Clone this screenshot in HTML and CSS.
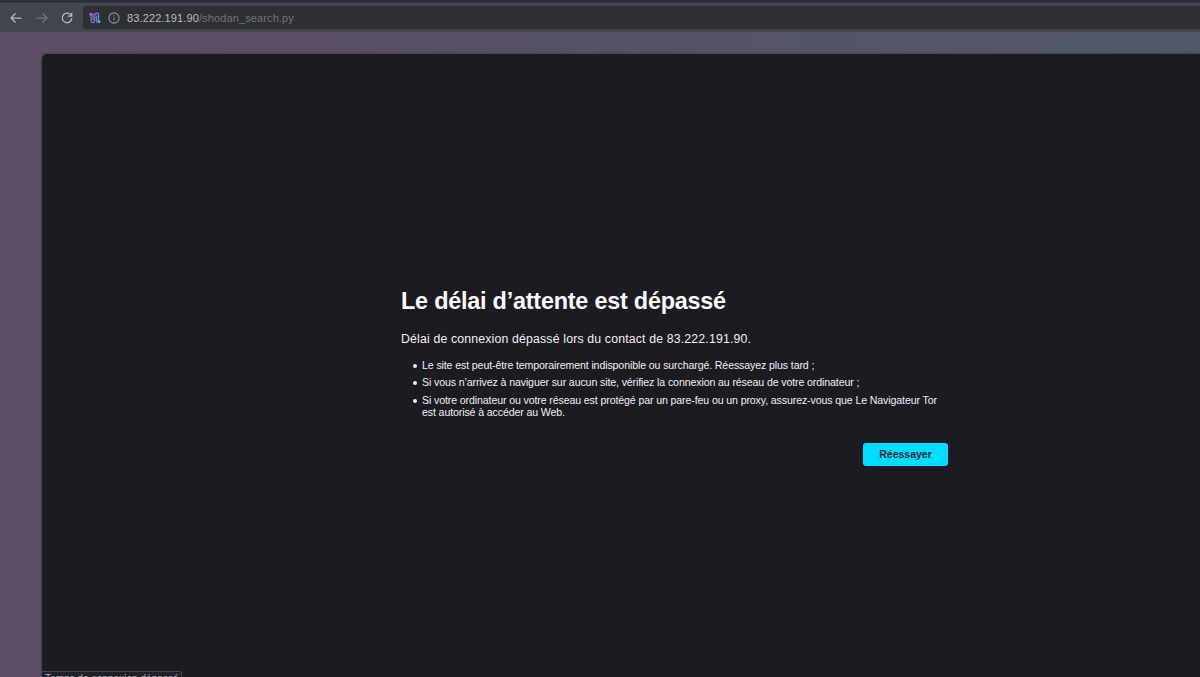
FILE: index.html
```html
<!DOCTYPE html>
<html lang="fr">
<head>
<meta charset="utf-8">
<title>Le délai d’attente est dépassé</title>
<link rel="stylesheet" href="styles.css">
</head>
<body>
<div class="browser">
  <header class="toolbar">
    <svg class="icon back" viewBox="0 0 14 14"><path d="M12.2 7H2M6.2 2.8 2 7l4.2 4.2"/></svg>
    <svg class="icon forward" viewBox="0 0 14 14"><path d="M1.8 7H12M7.8 2.8 12 7l-4.2 4.2"/></svg>
    <svg class="icon reload" viewBox="0 0 14 14"><path d="M11.1 4.3A4.8 4.8 0 1 0 11.8 7.6M11.7 2v3.2H8.3"/></svg>
    <div class="address">
      <svg class="circuit" viewBox="0 0 12 12">
        <defs><linearGradient id="route" gradientUnits="userSpaceOnUse" x1="0" y1="0" x2="12" y2="12"><stop offset="0" stop-color="#b45fdc"/><stop offset=".5" stop-color="#7f83e6"/><stop offset="1" stop-color="#43a5df"/></linearGradient></defs>
        <path d="M2 2.2v6.6a1.9 1.9 0 0 0 3.8 0V3a1.9 1.9 0 0 1 3.8 0v6.4M4 1.2v7.3M7.7 3.5v7.3" fill="none" stroke="url(#route)" stroke-width="1.1"/>
        <circle cx="1.8" cy="2.3" r="1.6" fill="#b45bd8"/><circle cx="10" cy="9.6" r="1.6" fill="#42aee6"/>
      </svg>
      <svg class="info" viewBox="0 0 12 12"><circle cx="6" cy="6" r="5.1"/><path d="M6 5.4v3.2M6 3.2v1.2"/></svg>
      <div class="url"><span class="host">83.222.191.90</span>/shodan_search.py</div>
    </div>
  </header>
  <main class="viewport">
    <section class="page">
      <div class="message">
        <h1 class="title">Le délai d’attente est dépassé</h1>
        <p class="summary">Délai de connexion dépassé lors du contact de 83.222.191.90.</p>
        <ul class="advice">
          <li>Le site est peut-être temporairement indisponible ou surchargé. Réessayez plus tard ;</li>
          <li>Si vous n’arrivez à naviguer sur aucun site, vérifiez la connexion au réseau de votre ordinateur ;</li>
          <li>Si votre ordinateur ou votre réseau est protégé par un pare-feu ou un proxy, assurez-vous que Le Navigateur Tor<br>est autorisé à accéder au Web.</li>
        </ul>
        <button class="retry">Réessayer</button>
      </div>
      <div class="status">Temps de connexion dépassé</div>
    </section>
  </main>
</div>
</body>
</html>
```

FILE: styles.css
```css
* { box-sizing: border-box; }
body { margin: 0; font-family: "Liberation Sans", Arial, sans-serif; }
.browser { display: flex; flex-direction: column; width: 1200px; height: 677px; overflow: hidden; }
.toolbar {
  flex: none; display: flex; align-items: center; height: 32px; padding: 4px 0 0 9px;
  background: linear-gradient(#2e313d 0 3px, #4a4d57 3px 4px, #42454d 4px 31px, #47494f 31px);
}
.icon { flex: none; width: 14px; height: 14px; fill: none; stroke: #b9bbbe; stroke-width: 1.25; stroke-linecap: round; stroke-linejoin: round; }
.forward { margin-left: 11.5px; stroke: #74767b; }
.reload { margin-left: 11.5px; }
.address {
  flex: 1; display: flex; align-items: center; height: 23px; margin: 0 0 1px 9px; padding-left: 6px;
  background: #2e2f33; border-radius: 3px 0 0 3px;
}
.circuit { flex: none; width: 12px; height: 12px; }
.info { flex: none; width: 12px; height: 12px; margin-left: 7px; fill: none; stroke: #929397; stroke-width: 1.1; }
.url { margin-left: 7px; color: #727377; font-size: 11px; line-height: 14px; letter-spacing: .12px; white-space: nowrap; }
.host { color: #bbbcbf; }
.viewport {
  flex: 1; display: flex; min-height: 0; padding: 21px 0 0 41px;
  background: linear-gradient(100deg, #5d4e67 0, #5b4f66 20%, #535568 70%, #505966 100%);
}
.page {
  position: relative; flex: 1; padding: 233px 0 0 359px; overflow: hidden;
  background: #1c1b21; border: solid #464650; border-width: 1px 0 0 1px; border-radius: 6px 0 0 0;
  box-shadow: 0 0 3px #4b4756;
}
.message { display: flex; flex-direction: column; width: 547px; color: #f0f0f3; }
.title { margin: 0; color: #fbfbfe; font-size: 23.4px; line-height: 28px; font-weight: 700; letter-spacing: -.22px; white-space: nowrap; }
.summary { margin: 16px 0 0; font-size: 12.3px; line-height: 16px; letter-spacing: .16px; white-space: nowrap; }
.advice { margin: 12px 0 0; padding-left: 21px; list-style: none; font-size: 10.6px; line-height: 12px; letter-spacing: -.117px; white-space: nowrap; }
.advice li { position: relative; }
.advice li + li { margin-top: 5.3px; }
.advice li::before {
  content: ""; position: absolute; left: -9px; top: 5px; width: 4px; height: 4px; border-radius: 50%; background: #f0f0f3;
}
.retry {
  align-self: flex-end; width: 85px; height: 23px; margin-top: 25px; padding: 0; border: 0; border-radius: 3px;
  background: #00ddff; color: #2b2a33; font: 700 10.5px/23px "Liberation Sans", Arial, sans-serif;
}
.status {
  position: absolute; left: 0; bottom: -8px; width: 140px; height: 14.5px; padding-left: 3px; overflow: hidden;
  background: #202128; border: 1px solid #44464e; border-left: 0; border-radius: 0 3px 0 0;
  color: #a9aaae; font-size: 10px; line-height: 13px; letter-spacing: .05px; white-space: nowrap;
}
```
